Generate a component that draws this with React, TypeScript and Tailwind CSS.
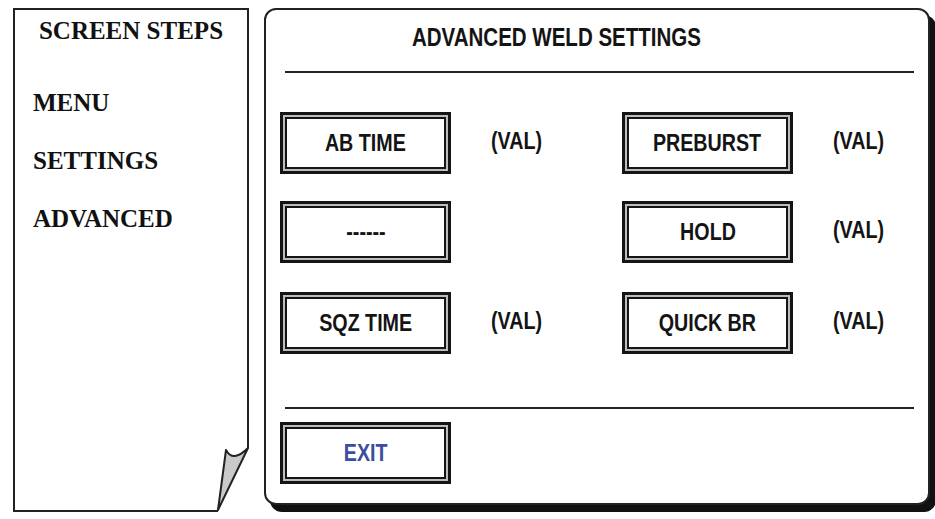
import React from "react";

const narrow = "font-['Liberation_Sans_Narrow','Arial_Narrow','Liberation_Sans',sans-serif] font-bold";

const steps = ["MENU", "SETTINGS", "ADVANCED"];

// the reference uses a narrow sans; squeeze Liberation Sans to match
const Squeeze = ({ children, left }: { children: React.ReactNode; left?: boolean }) => (
  <span className={`inline-block scale-x-[0.82] ${left ? "origin-left" : "origin-center"}`}>{children}</span>
);

const WeldButton = ({ label, blue }: { label: string; blue?: boolean }) => (
  <div className="w-[171px] h-[62px] shrink-0 border-[3px] border-[#151515] bg-[#bdbdbd] p-[2px]">
    <div
      className={`h-full border-2 border-[#151515] bg-white flex items-center justify-center text-[24px] leading-none ${
        blue ? "text-[#3c4c9e]" : "text-[#141414]"
      }`}
    >
      <Squeeze>{label}</Squeeze>
    </div>
  </div>
);

const Cell = ({ label, val, first }: { label: string; val?: boolean; first?: boolean }) => (
  <div className={`flex ${first ? "w-[342px] shrink-0" : "flex-1"}`}>
    <WeldButton label={label} />
    {val && (
      <span className="ml-[40px] mt-[17px] text-[24px] leading-none text-[#141414] whitespace-nowrap">
        <Squeeze left>(VAL)</Squeeze>
      </span>
    )}
  </div>
);

const StepsPanel = () => (
  <div className="relative w-[236px] h-[504px] shrink-0 border-2 border-[#222] bg-white font-['Liberation_Serif',serif] font-bold text-[25px] leading-none text-[#111]">
    <div className="mt-[8px] text-center">SCREEN STEPS</div>
    <div className="mt-[47px] pl-[18px] flex flex-col gap-[33px]">
      {steps.map((s) => (
        <div key={s}>{s}</div>
      ))}
    </div>
    {/* folded page corner */}
    <svg className="absolute left-[201px] top-[436px]" width="34" height="68" viewBox="0 0 34 68">
      <polygon points="32,2 36,-2 36,70 2,70 2,65" fill="#fff" />
      <path
        d="M32 2 Q17 17 10 4 L2 64 Z"
        fill="#c9c9c9"
        stroke="#222"
        strokeWidth="2"
        strokeLinejoin="round"
      />
    </svg>
  </div>
);

export default function App() {
  return (
    <div className="w-[935px] h-[519px] bg-white flex pt-[8px] pl-[13px] overflow-hidden">
      <StepsPanel />
      <div className={`ml-[15px] w-[666px] h-[497px] shrink-0 border-2 border-[#222] rounded-[12px] bg-white shadow-[6px_7px_0_#111] text-[#141414] ${narrow}`}>
        <div className="mt-[15px] pl-[146px] text-[25px] leading-none">
          <Squeeze left>ADVANCED WELD SETTINGS</Squeeze>
        </div>
        <div className="mt-[21px] ml-[19px] mr-[14px] h-[2px] bg-[#222]" />

        <div className="pl-[14px]">
          <div className="mt-[39px] flex">
            <Cell label="AB TIME" val first />
            <Cell label="PREBURST" val />
          </div>
          <div className="mt-[27px] flex">
            <Cell label="------" first />
            <Cell label="HOLD" val />
          </div>
          <div className="mt-[29px] flex">
            <Cell label="SQZ TIME" val first />
            <Cell label="QUICK BR" val />
          </div>
        </div>

        <div className="mt-[53px] ml-[19px] mr-[14px] h-[2px] bg-[#222]" />
        <div className="mt-[13px] pl-[14px]">
          <WeldButton label="EXIT" blue />
        </div>
      </div>
    </div>
  );
}
